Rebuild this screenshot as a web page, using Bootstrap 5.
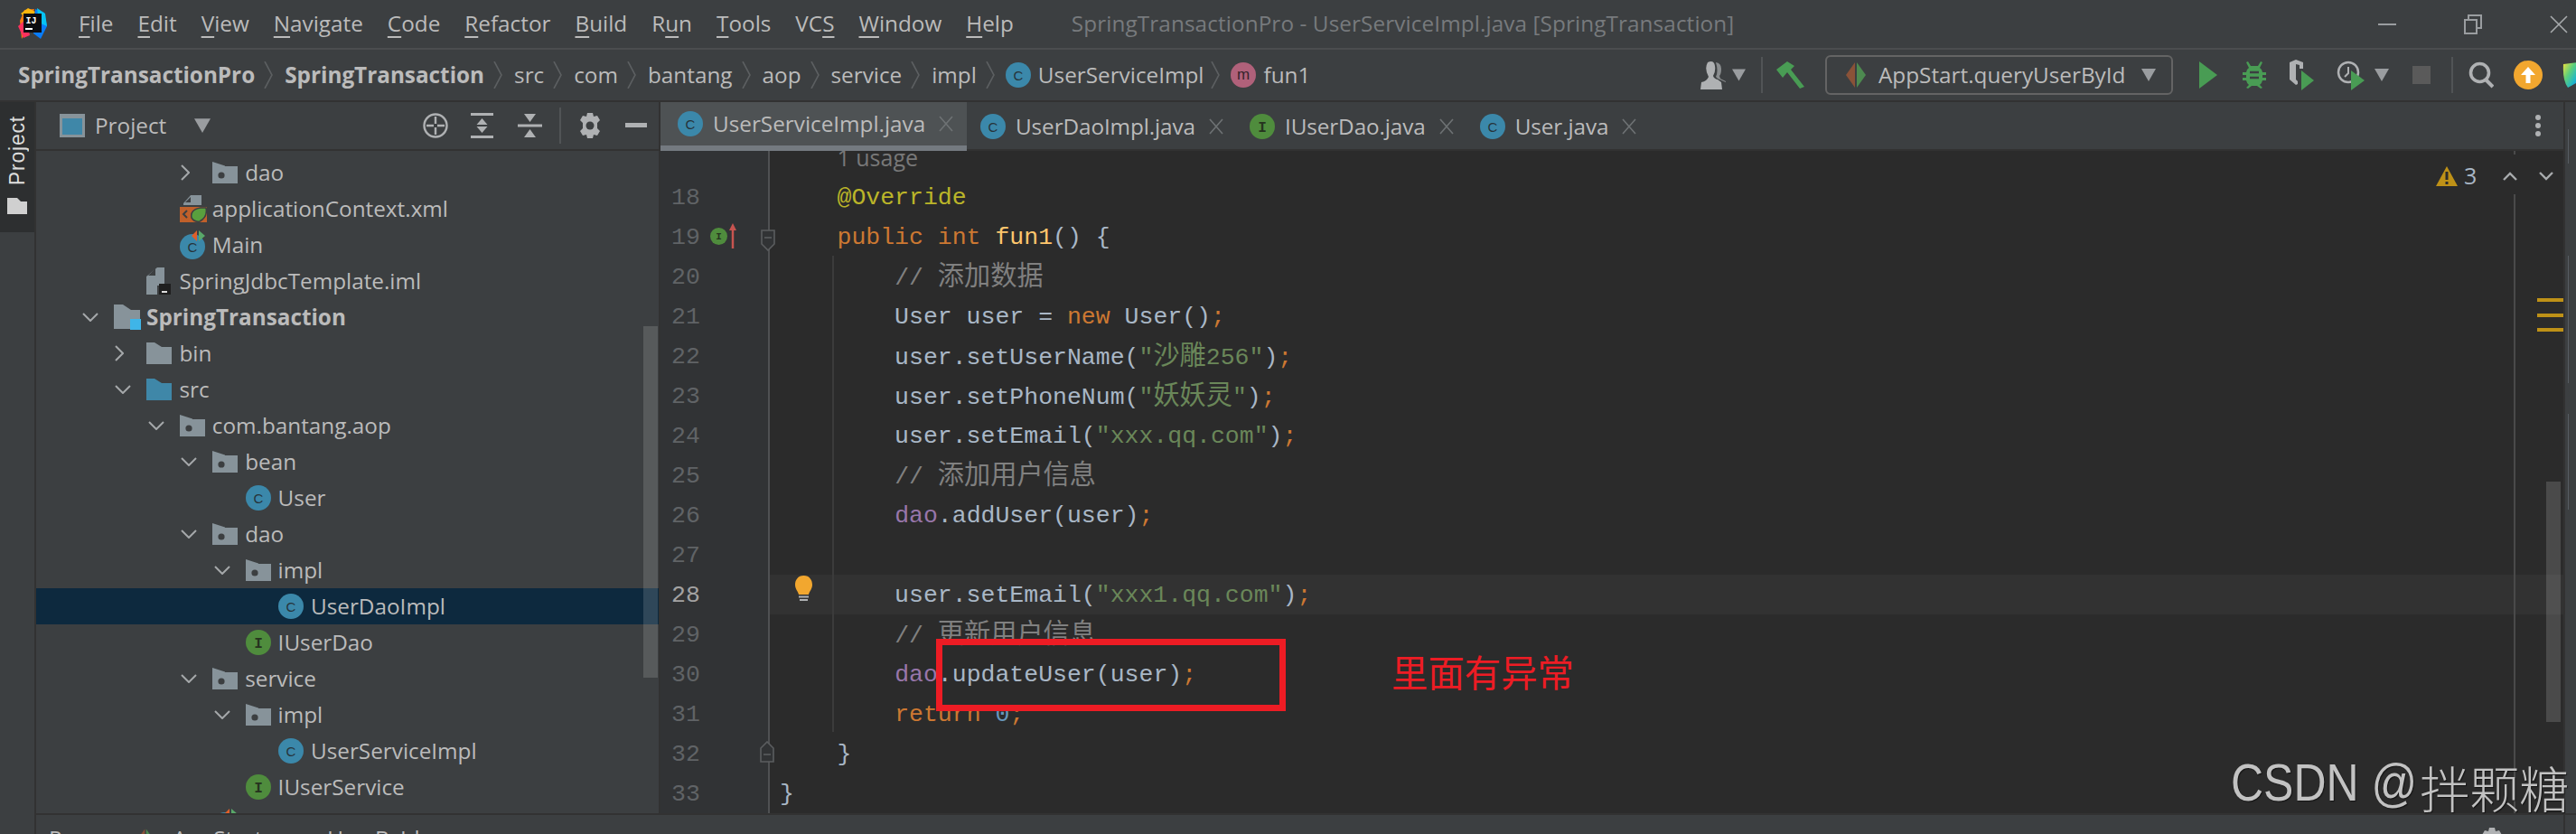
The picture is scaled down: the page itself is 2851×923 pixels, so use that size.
<!DOCTYPE html>
<html lang="en">
<head>
<meta charset="utf-8">
<title>SpringTransactionPro</title>
<link rel="stylesheet" href="https://cdn.jsdelivr.net/npm/bootstrap@5.3.0/dist/css/bootstrap.min.css">
<style>
html,body{margin:0;background:#3c3f41;overflow:hidden}
.ide{position:relative;width:2851px;height:923px;overflow:hidden;background:#3c3f41;color:#bbb;font-family:"Open Sans","Noto Sans CJK SC",sans-serif;font-size:24.3px;line-height:1}
.sprite{position:absolute;width:0;height:0}
.titlebar{height:53px;flex:none}
.sep-light{height:2px;background:#4b4d4f;flex:none}
.sep-dark{height:2px;background:#323232;flex:none}
.logo{margin-left:19px;flex:none}
.menu{margin-left:34px;gap:27px;color:#bbb}
.menu u{text-underline-offset:5px;text-decoration-thickness:2px}
.wintitle{margin-left:64px;color:#777a7d;white-space:nowrap;letter-spacing:.1px}
.winctl{margin-left:auto;margin-right:9px;gap:74px}
.crumbbar{height:56px;flex:none}
.crumbs{margin-left:20px}
.crumbs b{font-weight:700;color:#bbb}
.chev{margin:0 13px 0 10px;flex:none}
.gap-ico{margin:0 12px 0 10px;flex:none}
.chev-last{margin:0 12px 0 8px;flex:none}
.tgroup{margin-left:auto}
.m7{margin-left:7px}.m11{margin-left:11px}.m15{margin-left:15px}.m17{margin-left:17px}.m19{margin-left:19px}.m20{margin-left:20px}.m22{margin-left:22px}.m23{margin-left:23px}.m24{margin-left:24px}.m25{margin-left:25px}.m26{margin-left:26px}.m27{margin-left:27px}.m28{margin-left:28px}.m29{margin-left:29px}
.vsep{width:2px;height:40px;background:#515456;flex:none}
.runbox{width:385px;height:44px;border:2px solid #646464;border-radius:6px;padding-left:20px;flex:none}
.runbox span{margin-left:13px;width:287px;white-space:nowrap}
.body-row{height:810px}
.leftstrip{width:40px;flex:none;border-right:2px solid #323232}
.stripbtn{height:144px;width:38px;background:#2d2f30;color:#ddd;padding-top:15px}
.vtext{writing-mode:vertical-rl;transform:rotate(180deg);font-size:23px;font-family:"Liberation Sans",sans-serif;white-space:nowrap;letter-spacing:.8px}
.stripbtn svg{margin-top:14px}
.workarea{min-width:0}
.upper{height:787px}
.pane{width:691px;flex:none;position:relative;border-right:2px solid #323232}
.panehead{height:52px;flex:none;padding-left:26px;padding-right:13px}
.panehead .pname{margin-left:11px;width:110px}
.tree{flex:1;overflow:hidden;padding-top:4px;min-height:0}
.trow{height:40px;display:flex;align-items:center;white-space:nowrap;color:#bbb;flex:none}
.lv0{padding-left:50px}.lv1{padding-left:86.4px}.lv2{padding-left:122.8px}.lv3{padding-left:159.2px}.lv4{padding-left:195.6px}.lv5{padding-left:232px}
.arr{width:36px;flex:none;display:flex;justify-content:flex-start;padding-left:1px}
.trow svg.ti{flex:none;margin-right:8px}
.trow svg.ti.wide{margin-right:6px}
.trow.sel{background:#0d293e}
.treeboldname{font-weight:700}
.thumb{position:absolute;left:672px;top:248px;width:16px;height:389px;background:rgba(255,255,255,.14)}
.editcol{min-width:0}
.tabbar{height:52px;flex:none;position:relative}
.etab{height:54px;padding:0 14px 0 15px;display:flex;align-items:center;white-space:nowrap;color:#bbb;position:relative;flex:none}
.etab.on{background:#4e5254;padding-left:19px;padding-right:0;padding-bottom:6px;width:339px;align-self:flex-start}
.etab.on::after{content:"";position:absolute;left:0;right:0;bottom:0;height:6px;background:#747a80}
.etab .tname{margin-left:11px;margin-right:15px;flex:none;letter-spacing:-.1px}
.etab.on .tname{letter-spacing:0}
.tabdots{position:absolute;left:2074px;top:14px}
.sep-tab{height:2px;background:#323232;flex:none}
.edit{flex:1;position:relative;overflow:hidden;background:#2b2b2b;min-height:0;font-family:"Liberation Mono","Noto Sans CJK SC",monospace;font-size:26.5px;color:#a9b7c6}
.lines{margin-top:-15px}
.cl{height:44px;display:flex;white-space:pre}
.gut{width:121px;flex:none;background:#313335;border-right:2px solid #4f5153;color:#606366;padding-left:12px;line-height:47px;overflow:hidden}
.cc{flex:1;line-height:47px;padding-left:74.5px;overflow:hidden}
.cl.cur .cc{background:#323232}
.cl.cur .gut{color:#a4a3a3}
.zh{font-size:29.2px;letter-spacing:0}
.k{color:#cc7832}.an{color:#bbb529}.fn{color:#ffc66d}.st{color:#6a8759}.cm{color:#808080}.fd{color:#9876aa}.nu{color:#6897bb}
.usage{font-family:"Open Sans",sans-serif;font-size:25px;color:#787878;line-height:44px}
.outer{padding-left:10.9px}
.guide{position:absolute;left:190px;top:116px;height:527px;width:2px;background:#3b3b3b}
.margin-a{position:absolute;left:2051px;top:48px;bottom:0;width:2px;background:#4a4a4a}
.margin-b{position:absolute;left:2051px;top:0;height:4px;width:2px;background:#4a4a4a}
.sbar{position:absolute;left:2087px;top:366px;width:16px;height:266px;background:rgba(255,255,255,.15)}
.wmark{position:absolute;left:2077px;width:29px;height:4px;background:#be9117}
.mk1{top:163px}.mk2{top:180px}.mk3{top:196px}
.warnw{position:absolute;left:1965px;top:15px;font-family:"Open Sans",sans-serif;font-size:25px;color:#a9b7c6}
.warnw span{margin:0 29px 0 7px}
.gi-i{position:absolute;left:55px;top:85px}
.gi-a{position:absolute;left:76px;top:80px}
.gi-f1{position:absolute;left:111px;top:87px}
.gi-f2{position:absolute;left:110px;top:653px}
.bulb{position:absolute;left:148px;top:470px}
.redbox{position:absolute;left:305px;top:540px;width:387px;height:80px;border:7.5px solid #ed1c24}
.redtxt{position:absolute;left:809px;top:554px;color:#ed1c24;font-family:"Noto Sans CJK SC",sans-serif;font-size:40.4px;line-height:44px;white-space:nowrap}
.botbar{height:21px;flex:none;overflow:hidden}
.botrow{padding:14px 0 0 14px;white-space:nowrap;flex:1;min-width:0}
.botrun{margin-left:47px;flex:none}
.botname{margin-left:21px}
.botgear{margin-left:auto;margin-right:67px;flex:none}
.botend{width:14px;flex:none;border-left:2px solid #323232}
.rightstrip{width:14px;flex:none;border-left:2px solid #323232;overflow:hidden;position:relative}
.vr{position:absolute;left:3px;writing-mode:vertical-rl;white-space:nowrap;font-family:"Open Sans",sans-serif;font-size:24px;line-height:30px;color:#a9b7c6}
.vr1{top:170px}.vr2{top:345px}.vr3{top:30px}
.stamp{position:absolute;left:2469px;top:838px;color:#c2c2c2;white-space:nowrap;text-shadow:1px 1px 1px rgba(0,0,0,.55);display:flex;align-items:flex-end;height:62px;z-index:3}
.stamp .la{font-family:"Liberation Sans",sans-serif;font-size:50px;display:inline-block;transform:scaleY(1.15);transform-origin:50% 100%;line-height:50px;white-space:pre;margin-bottom:5px}
.stamp .cj{font-family:"Noto Sans CJK SC",sans-serif;font-size:55px;font-weight:300;line-height:60px;margin-left:3px}
</style>
</head>
<body>
<svg class="sprite" aria-hidden="true">
  <defs>
    <linearGradient id="lgb" x1="0" y1="0" x2="1" y2="1"><stop offset="0" stop-color="#f5e23c"/><stop offset=".4" stop-color="#5fcf7a"/><stop offset=".75" stop-color="#1fb6c9"/><stop offset="1" stop-color="#1c7fe0"/></linearGradient>
    <symbol id="ic-c" viewBox="0 0 28 28"><circle cx="14" cy="14" r="14" fill="#3b88aa"/><text x="14" y="19.5" text-anchor="middle" font-family="Liberation Sans" font-size="15" fill="#26333a">C</text></symbol>
    <symbol id="ic-i" viewBox="0 0 28 28"><circle cx="14" cy="14" r="14" fill="#4f8c3d"/><text x="14" y="19.5" text-anchor="middle" font-family="Liberation Mono" font-weight="700" font-size="16" fill="#26331f">I</text></symbol>
    <symbol id="ic-m" viewBox="0 0 28 28"><circle cx="14" cy="14" r="14" fill="#b0617a"/><text x="14" y="19" text-anchor="middle" font-family="Liberation Sans" font-size="17" fill="#35242b">m</text></symbol>
    <symbol id="ic-run" viewBox="0 0 30 32"><circle cx="14" cy="18" r="14" fill="#3b88aa"/><text x="14" y="23.5" text-anchor="middle" font-family="Liberation Sans" font-size="15" fill="#26333a">C</text><path d="M13 6l6-6v12z" fill="#e0602a"/><path d="M21 0l7 6-7 6z" fill="#59a869"/></symbol>
    <symbol id="ic-pk" viewBox="0 0 28 24"><path d="M0 0l14 4.500V5h14v19H0z" fill="#87939a"/><circle cx="10" cy="15" r="3.600" fill="#3c3f41"/></symbol>
    <symbol id="ic-fd" viewBox="0 0 28 24"><path d="M0 0h9l8 5h11v19H0z" fill="#87939a"/></symbol>
    <symbol id="ic-src" viewBox="0 0 28 24"><path d="M0 0h9l8 5h11v19H0z" fill="#3f87a8"/></symbol>
    <symbol id="ic-mod" viewBox="0 0 30 28"><path d="M0 0h10l9 6h10v10H18v11H0z" fill="#87939a"/><rect x="18" y="16" width="12" height="12" fill="#3fb5e8"/></symbol>
    <symbol id="ic-xml" viewBox="0 0 30 30"><path d="M24 0v11H4V9L12 0z" fill="#87939a"/><path d="M12 2v6H6z" fill="#3c3f41"/><rect y="13" width="30" height="17" fill="#c0602a"/><path d="M13 25q-2-9 10-11h6q2 10-7 15-6 1-9-4z" fill="#59a03e" stroke="#3c3f41" stroke-width="1.5"/><path d="M8 17l-4 4 4 4" fill="none" stroke="#3c3f41" stroke-width="2"/></symbol>
    <symbol id="ic-iml" viewBox="0 0 28 30"><path d="M0 10L12 0h8v20H0z" fill="#87939a"/><path d="M10 1v8H2z" fill="#3c3f41"/><path d="M0 20h12v10H0z" fill="#87939a"/><rect x="14" y="18" width="13" height="12" fill="#1f1f1f"/><rect x="17" y="26" width="6" height="2" fill="#ddd"/></symbol>
    <symbol id="ch-d" viewBox="0 0 18 10"><path d="M1 1l8 8 8-8" fill="none" stroke="#a5a8aa" stroke-width="2"/></symbol>
    <symbol id="ch-r" viewBox="0 0 10 18"><path d="M1 1l8 8-8 8" fill="none" stroke="#a5a8aa" stroke-width="2"/></symbol>
    <symbol id="cr-d" viewBox="0 0 10 30"><path d="M1 0l8 15-8 15" fill="none" stroke="#5c5f61" stroke-width="1.600"/></symbol>
    <symbol id="x-ic" viewBox="0 0 16 18"><path d="M1 1l14 16M15 1L1 17" fill="none" stroke="#6e7274" stroke-width="1.600"/></symbol>
    <symbol id="car" viewBox="0 0 16 14"><path d="M0 0h16L8 14z" fill="#9a9da0"/></symbol>
    <symbol id="ic-cfg" viewBox="0 0 24 30"><path d="M11 1v28L1 15z" fill="#8a5238"/><path d="M13 1v28l10-14z" fill="#4d8a50"/></symbol>
    <symbol id="ic-fold" viewBox="0 0 16 24"><path d="M1 1h14v15l-7 7-7-7z" fill="#313335" stroke="#5b5d5f" stroke-width="1.600"/><path d="M4 9h8" stroke="#5b5d5f" stroke-width="1.600"/></symbol>
  </defs>
</svg>

<div class="ide d-flex flex-column">
  <div class="titlebar d-flex align-items-center">
    <svg class="logo" width="34" height="36" viewBox="0 0 34 36"><path d="M3 14L8 2l11-1-6 20L5 34z" fill="#f97a12"/><path d="M1 20l9-8 4 18-7 3z" fill="#fe315d"/><path d="M4 6l8-6 8 4-6 10z" fill="#fdb60d"/><path d="M20 1l10 4 3 15-7 14-8-6z" fill="#087cfa"/><path d="M22 0l9 6 2 14-9-4z" fill="#07c3f2"/><rect x="7" y="6" width="20" height="21" fill="#0c0c10"/><text x="9.500" y="17" font-family="Liberation Mono" font-weight="700" font-size="10" fill="#fff">IJ</text><rect x="9" y="22" width="8" height="2" fill="#fff"/></svg>
    <div class="menu d-flex">
      <span><u>F</u>ile</span><span><u>E</u>dit</span><span><u>V</u>iew</span><span><u>N</u>avigate</span><span><u>C</u>ode</span><span><u>R</u>efactor</span><span><u>B</u>uild</span><span>R<u>u</u>n</span><span><u>T</u>ools</span><span>VC<u>S</u></span><span><u>W</u>indow</span><span><u>H</u>elp</span>
    </div>
    <div class="wintitle">SpringTransactionPro - UserServiceImpl.java [SpringTransaction]</div>
    <div class="winctl d-flex align-items-center">
      <svg width="20" height="4" viewBox="0 0 20 4"><rect y="1" width="20" height="2" fill="#9a9da0"/></svg>
      <svg width="22" height="22" viewBox="0 0 22 22"><path d="M6 5V1h14v14h-4M2 6h13v15H2z" fill="none" stroke="#9a9da0" stroke-width="2"/></svg>
      <svg width="20" height="20" viewBox="0 0 20 20"><path d="M1 1l18 18M19 1L1 19" fill="none" stroke="#a8abad" stroke-width="1.600"/></svg>
    </div>
  </div>
  <div class="sep-light"></div>

  <div class="crumbbar d-flex align-items-center">
    <div class="crumbs d-flex align-items-center">
      <b>SpringTransactionPro</b><svg class="chev" width="10" height="30"><use href="#cr-d"/></svg>
      <b>SpringTransaction</b><svg class="chev" width="10" height="30"><use href="#cr-d"/></svg>
      <span>src</span><svg class="chev" width="10" height="30"><use href="#cr-d"/></svg>
      <span>com</span><svg class="chev" width="10" height="30"><use href="#cr-d"/></svg>
      <span>bantang</span><svg class="chev" width="10" height="30"><use href="#cr-d"/></svg>
      <span>aop</span><svg class="chev" width="10" height="30"><use href="#cr-d"/></svg>
      <span>service</span><svg class="chev" width="10" height="30"><use href="#cr-d"/></svg>
      <span>impl</span><svg class="gap-ico" width="10" height="30"><use href="#cr-d"/></svg>
      <svg width="28" height="28"><use href="#ic-c"/></svg><span class="ms-2">UserServiceImpl</span><svg class="chev-last" width="10" height="30"><use href="#cr-d"/></svg>
      <svg width="28" height="28"><use href="#ic-m"/></svg><span class="ms-2">fun1</span>
    </div>
    <div class="tgroup d-flex align-items-center">
      <svg width="28" height="32" viewBox="0 0 28 32"><path d="M8 2q7-3 8 4 1 6-2 11 1 3 5 4l4 3 1 8H0l1-8q6-1 8-6Q4 9 8 2z" fill="#afb1b3"/><path d="M17 2q6 1 6 7 0 6-2 8l1 3 6 3v1l-9-4-2-2q3-6 0-16z" fill="#8a8d8f"/></svg>
      <svg class="m7" width="15" height="14"><use href="#car"/></svg>
      <div class="vsep m17"></div>
      <svg class="m15" width="32" height="30" viewBox="0 0 32 30"><path d="M12 0l8 5-4 4 15 19-5 2L12 12l-5 6-7-9z" fill="#499c54"/></svg>
      <div class="runbox m22 d-flex align-items-center">
        <svg width="24" height="30"><use href="#ic-cfg"/></svg>
        <span>AppStart.queryUserById</span>
        <svg class="ms-1" width="16" height="14"><use href="#car"/></svg>
      </div>
      <svg class="m29" width="20" height="30" viewBox="0 0 20 30"><path d="M0 0l20 15L0 30z" fill="#499c54"/></svg>
      <svg class="m28" width="26" height="30" viewBox="0 0 26 30"><path d="M6 0l3 5h8l3-5 2 1-3 6q3 2 3 5h4v3h-4v3h4v3h-4q-1 4-3 5l3 3-2 1-4-3h-6l-4 3-2-1 3-3q-2-1-3-5H0v-3h4v-3H0v-3h4q0-3 3-5L4 1z" fill="#499c54"/><path d="M8 12h10M8 18h10" stroke="#3c3f41" stroke-width="2.500"/></svg>
      <svg class="m24" width="30" height="34" viewBox="0 0 30 34"><path d="M2 3l7-3 8 3v7h-4V6L9 5v17l2 2v3l-2 1-7-6z" fill="#afb1b3"/><path d="M15 12l14 11-14 11z" fill="#499c54"/></svg>
      <svg class="m24" width="31" height="34" viewBox="0 0 31 34"><circle cx="13" cy="14" r="11" fill="none" stroke="#afb1b3" stroke-width="2.500"/><path d="M13 8v7l-4 4" fill="none" stroke="#afb1b3" stroke-width="2"/><path d="M16 12l15 11-15 11z" fill="#499c54"/></svg>
      <svg class="m11" width="16" height="14"><use href="#car"/></svg>
      <svg class="m26" width="20" height="20"><rect width="20" height="20" fill="#5a5a5a"/></svg>
      <div class="vsep m23"></div>
      <svg class="m17" width="28" height="30" viewBox="0 0 28 30"><circle cx="12.500" cy="12.500" r="10" fill="none" stroke="#afb1b3" stroke-width="3.600"/><path d="M19 20l8 8" stroke="#afb1b3" stroke-width="4"/></svg>
      <svg class="m22" width="32" height="32" viewBox="0 0 32 32"><circle cx="16" cy="16" r="16" fill="#f2a72f"/><path d="M16 7l8 9h-5.500v9h-5v-9H8z" fill="#fff"/></svg>
      <svg class="m22" width="15" height="28" viewBox="0 0 15 28"><path d="M1 2l16-2v22l-11 6Q0 20 1 2z" fill="url(#lgb)"/></svg>
    </div>
  </div>
  <div class="sep-dark"></div>

  <div class="body-row d-flex flex-grow-1">
    <div class="leftstrip">
      <div class="stripbtn d-flex flex-column align-items-center">
        <span class="vtext">Project</span>
        <svg width="22" height="18" viewBox="0 0 22 18"><path d="M0 0h11l4 4h7v14H0z" fill="#d0d0d0"/></svg>
      </div>
    </div>
    <div class="workarea d-flex flex-column flex-grow-1">
      <div class="upper d-flex">
        <div class="pane d-flex flex-column">
          <div class="panehead d-flex align-items-center">
            <svg width="28" height="26" viewBox="0 0 28 26"><rect width="28" height="26" fill="#87939a"/><rect x="3" y="5" width="22" height="18" fill="#3f87a8"/></svg>
            <span class="pname">Project</span>
            <svg width="18" height="16"><use href="#car"/></svg>
            <svg class="ms-auto" width="28" height="28" viewBox="0 0 28 28"><circle cx="14" cy="14" r="12.500" fill="none" stroke="#afb1b3" stroke-width="2.400"/><path d="M14 4v8M14 16v8M4 14h8M16 14h8" stroke="#afb1b3" stroke-width="2.400"/></svg>
            <svg class="m25" width="25" height="28" viewBox="0 0 25 28"><path d="M0 1.500h25M0 26.500h25" stroke="#afb1b3" stroke-width="3"/><path d="M12.500 6l6 7h-12zM6.500 15h12l-6 7z" fill="#afb1b3"/></svg>
            <svg class="m27" width="27" height="28" viewBox="0 0 27 28"><path d="M0 14h27" stroke="#afb1b3" stroke-width="3"/><path d="M7 1h13l-6.500 9zM13.500 18l6.500 9H7z" fill="#afb1b3"/></svg>
            <div class="vsep m19"></div>
            <svg class="m20" width="24" height="28" viewBox="0 0 24 28"><path d="M9 0h6l1 4 4-1 3 5-3 3v6l3 3-3 5-4-1-1 4H9l-1-4-4 1-3-5 3-3v-6L1 8l3-5 4 1z" fill="#afb1b3"/><circle cx="12" cy="14" r="4.500" fill="#3c3f41"/></svg>
            <svg class="m27" width="24" height="6" viewBox="0 0 24 6"><rect width="24" height="5" fill="#afb1b3"/></svg>
          </div>
          <div class="sep-dark"></div>
          <div class="tree d-flex flex-column">
            <div class="trow lv3"><span class="arr"><svg width="10" height="18"><use href="#ch-r"/></svg></span><svg class="ti" width="28" height="24"><use href="#ic-pk"/></svg><span>dao</span></div>
            <div class="trow lv2"><span class="arr"></span><svg class="ti wide" width="30" height="30"><use href="#ic-xml"/></svg><span>applicationContext.xml</span></div>
            <div class="trow lv2"><span class="arr"></span><svg class="ti wide" width="30" height="32"><use href="#ic-run"/></svg><span>Main</span></div>
            <div class="trow lv1"><span class="arr"></span><svg class="ti" width="28" height="30"><use href="#ic-iml"/></svg><span>SpringJdbcTemplate.iml</span></div>
            <div class="trow lv0"><span class="arr"><svg width="18" height="10"><use href="#ch-d"/></svg></span><svg class="ti wide" width="30" height="28"><use href="#ic-mod"/></svg><span class="treeboldname">SpringTransaction</span></div>
            <div class="trow lv1"><span class="arr"><svg width="10" height="18"><use href="#ch-r"/></svg></span><svg class="ti" width="28" height="24"><use href="#ic-fd"/></svg><span>bin</span></div>
            <div class="trow lv1"><span class="arr"><svg width="18" height="10"><use href="#ch-d"/></svg></span><svg class="ti" width="28" height="24"><use href="#ic-src"/></svg><span>src</span></div>
            <div class="trow lv2"><span class="arr"><svg width="18" height="10"><use href="#ch-d"/></svg></span><svg class="ti" width="28" height="24"><use href="#ic-pk"/></svg><span>com.bantang.aop</span></div>
            <div class="trow lv3"><span class="arr"><svg width="18" height="10"><use href="#ch-d"/></svg></span><svg class="ti" width="28" height="24"><use href="#ic-pk"/></svg><span>bean</span></div>
            <div class="trow lv4"><span class="arr"></span><svg class="ti" width="28" height="28"><use href="#ic-c"/></svg><span>User</span></div>
            <div class="trow lv3"><span class="arr"><svg width="18" height="10"><use href="#ch-d"/></svg></span><svg class="ti" width="28" height="24"><use href="#ic-pk"/></svg><span>dao</span></div>
            <div class="trow lv4"><span class="arr"><svg width="18" height="10"><use href="#ch-d"/></svg></span><svg class="ti" width="28" height="24"><use href="#ic-pk"/></svg><span>impl</span></div>
            <div class="trow lv5 sel"><span class="arr"></span><svg class="ti" width="28" height="28"><use href="#ic-c"/></svg><span>UserDaoImpl</span></div>
            <div class="trow lv4"><span class="arr"></span><svg class="ti" width="28" height="28"><use href="#ic-i"/></svg><span>IUserDao</span></div>
            <div class="trow lv3"><span class="arr"><svg width="18" height="10"><use href="#ch-d"/></svg></span><svg class="ti" width="28" height="24"><use href="#ic-pk"/></svg><span>service</span></div>
            <div class="trow lv4"><span class="arr"><svg width="18" height="10"><use href="#ch-d"/></svg></span><svg class="ti" width="28" height="24"><use href="#ic-pk"/></svg><span>impl</span></div>
            <div class="trow lv5"><span class="arr"></span><svg class="ti" width="28" height="28"><use href="#ic-c"/></svg><span>UserServiceImpl</span></div>
            <div class="trow lv4"><span class="arr"></span><svg class="ti" width="28" height="28"><use href="#ic-i"/></svg><span>IUserService</span></div>
            <div class="trow lv3"><span class="arr"></span><svg class="ti wide" width="30" height="32"><use href="#ic-run"/></svg></div>
          </div>
          <div class="thumb"></div>
        </div>
        <div class="editcol d-flex flex-column flex-grow-1">
          <div class="tabbar d-flex">
            <div class="etab on"><svg width="28" height="28"><use href="#ic-c"/></svg><span class="tname">UserServiceImpl.java</span><svg width="16" height="18"><use href="#x-ic"/></svg></div>
            <div class="etab"><svg width="28" height="28"><use href="#ic-c"/></svg><span class="tname">UserDaoImpl.java</span><svg width="16" height="18"><use href="#x-ic"/></svg></div>
            <div class="etab"><svg width="28" height="28"><use href="#ic-i"/></svg><span class="tname">IUserDao.java</span><svg width="16" height="18"><use href="#x-ic"/></svg></div>
            <div class="etab"><svg width="28" height="28"><use href="#ic-c"/></svg><span class="tname">User.java</span><svg width="16" height="18"><use href="#x-ic"/></svg></div>
            <svg class="tabdots" width="8" height="24" viewBox="0 0 8 24"><circle cx="4" cy="3" r="3" fill="#afb1b3"/><circle cx="4" cy="12" r="3" fill="#afb1b3"/><circle cx="4" cy="21" r="3" fill="#afb1b3"/></svg>
          </div>
          <div class="sep-tab"></div>
          <div class="edit">
            <div class="lines">
              <div class="cl"><div class="gut"></div><div class="cc usage">1 usage</div></div>
              <div class="cl"><div class="gut">18</div><div class="cc"><span class="an">@Override</span></div></div>
              <div class="cl"><div class="gut">19</div><div class="cc"><span class="k">public int </span><span class="fn">fun1</span>() {</div></div>
              <div class="cl"><div class="gut">20</div><div class="cc">    <span class="cm">// <span class="zh">添加数据</span></span></div></div>
              <div class="cl"><div class="gut">21</div><div class="cc">    User user = <span class="k">new</span> User()<span class="k">;</span></div></div>
              <div class="cl"><div class="gut">22</div><div class="cc">    user.setUserName(<span class="st">"<span class="zh">沙雕</span>256"</span>)<span class="k">;</span></div></div>
              <div class="cl"><div class="gut">23</div><div class="cc">    user.setPhoneNum(<span class="st">"<span class="zh">妖妖灵</span>"</span>)<span class="k">;</span></div></div>
              <div class="cl"><div class="gut">24</div><div class="cc">    user.setEmail(<span class="st">"xxx.qq.com"</span>)<span class="k">;</span></div></div>
              <div class="cl"><div class="gut">25</div><div class="cc">    <span class="cm">// <span class="zh">添加用户信息</span></span></div></div>
              <div class="cl"><div class="gut">26</div><div class="cc">    <span class="fd">dao</span>.addUser(user)<span class="k">;</span></div></div>
              <div class="cl"><div class="gut">27</div><div class="cc"></div></div>
              <div class="cl cur"><div class="gut">28</div><div class="cc">    user.setEmail(<span class="st">"xxx1.qq.com"</span>)<span class="k">;</span></div></div>
              <div class="cl"><div class="gut">29</div><div class="cc">    <span class="cm">// <span class="zh">更新用户信息</span></span></div></div>
              <div class="cl"><div class="gut">30</div><div class="cc">    <span class="fd">dao</span>.updateUser(user)<span class="k">;</span></div></div>
              <div class="cl"><div class="gut">31</div><div class="cc">    <span class="k">return </span><span class="nu">0</span><span class="k">;</span></div></div>
              <div class="cl"><div class="gut">32</div><div class="cc">}</div></div>
              <div class="cl"><div class="gut">33</div><div class="cc outer">}</div></div>
            </div>
            <div class="guide"></div>
            <div class="margin-a"></div><div class="margin-b"></div>
            <svg class="gi-i" width="19" height="19"><use href="#ic-i"/></svg>
            <svg class="gi-a" width="8" height="28" viewBox="0 0 8 28"><path d="M4 0l4 8H0z" fill="#c75450"/><path d="M4 6v22" stroke="#c75450" stroke-width="2.500"/></svg>
            <svg class="gi-f1" width="16" height="24"><use href="#ic-fold"/></svg>
            <svg class="gi-f2" width="16" height="24" viewBox="0 0 16 24"><path d="M1 23h14V8L8 1 1 8z" fill="#313335" stroke="#5b5d5f" stroke-width="1.600"/><path d="M4 15h8" stroke="#5b5d5f" stroke-width="1.600"/></svg>
            <svg class="bulb" width="21" height="29" viewBox="0 0 21 29"><path d="M10.500 0C4 0 1 5 1 10c0 5 3 7 4 11h11c1-4 4-6 4-11 0-5-3-10-9.500-10z" fill="#f2a72f"/><path d="M5 23.500h11M6 27h9" stroke="#afb1b3" stroke-width="2"/></svg>
            <div class="sbar"></div>
            <div class="wmark mk1"></div><div class="wmark mk2"></div><div class="wmark mk3"></div>
            <div class="warnw d-flex align-items-center">
              <svg width="24" height="22" viewBox="0 0 24 22"><path d="M12 0l12 22H0z" fill="#be9117"/><rect x="10.500" y="6" width="3" height="9" fill="#2b2b2b"/><rect x="10.500" y="17" width="3" height="3" fill="#2b2b2b"/></svg>
              <span>3</span>
              <svg width="16" height="10" viewBox="0 0 16 10"><path d="M1 9l7-7 7 7" fill="none" stroke="#a8abad" stroke-width="2.400"/></svg>
              <svg class="ms-4" width="16" height="10" viewBox="0 0 16 10"><path d="M1 1l7 7 7-7" fill="none" stroke="#a8abad" stroke-width="2.400"/></svg>
            </div>
            <div class="redbox"></div>
            <div class="redtxt">里面有异常</div>
          </div>
        </div>
        <div class="rightstrip">
          <span class="vr vr3">Ant</span>
          <span class="vr vr1">Notifications</span>
          <span class="vr vr2">Database</span>
        </div>
      </div>
      <div class="sep-dark"></div>
      <div class="botbar d-flex">
        <div class="botrow d-flex align-items-start">
          <span>Run:</span>
          <svg class="botrun" width="18" height="24"><use href="#ic-cfg"/></svg>
          <span class="botname">AppStart.queryUserById</span>
          <svg class="botgear" width="24" height="28" viewBox="0 0 24 28"><path d="M9 0h6l1 4 4-1 3 5-3 3v6l3 3-3 5-4-1-1 4H9l-1-4-4 1-3-5 3-3v-6L1 8l3-5 4 1z" fill="#afb1b3"/></svg>
        </div>
        <div class="botend"></div>
      </div>
    </div>
  </div>
  <div class="stamp"><span class="la">CSDN @</span><span class="cj">拌颗糖</span></div>
</div>
<script src="https://cdn.jsdelivr.net/npm/bootstrap@5.3.0/dist/js/bootstrap.bundle.min.js"></script>
</body>
</html>
